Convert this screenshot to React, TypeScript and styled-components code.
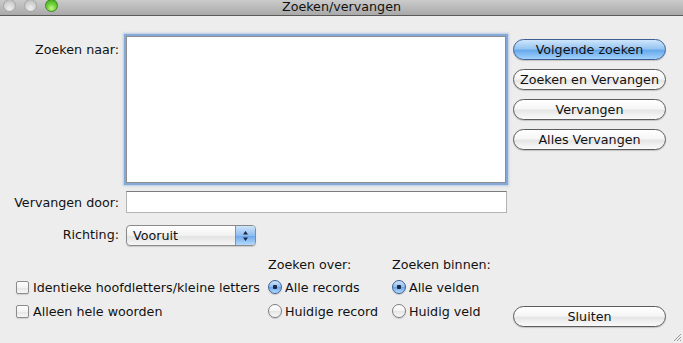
import React from "react";
import styled, { createGlobalStyle } from "styled-components";

const GlobalStyle = createGlobalStyle`
  html, body {
    margin: 0;
    padding: 0;
    background: #ededed;
  }
  body {
    font-family: "DejaVu Sans", "Liberation Sans", sans-serif;
    font-size: 12.7px;
    color: #111;
  }
`;

const Window = styled.div`
  position: relative;
  width: 683px;
  height: 343px;
  overflow: hidden;
  background: #ededed;
  display: flex;
  flex-direction: column;
`;

const TitleBar = styled.div`
  height: 15px;
  flex: none;
  display: grid;
  grid-template-columns: 1fr auto 1fr;
  align-items: center;
  background: linear-gradient(#cbcbcb, #a9a9a9);
  border-bottom: 1px solid #5a5a5a;
  box-sizing: content-box;
`;

const Lights = styled.div`
  display: flex;
  gap: 8px;
  padding-left: 3px;
  margin-top: -4px;
`;

const Light = styled.span<{ $green?: boolean }>`
  width: 13px;
  height: 13px;
  border-radius: 50%;
  box-sizing: border-box;
  border: 1px solid ${({ $green }) => ($green ? "#3f8a1c" : "#a8a8a8")};
  background: ${({ $green }) =>
    $green
      ? "radial-gradient(circle at 50% 75%, #c6f58a 0%, #6fd23a 45%, #3b9a19 100%)"
      : "radial-gradient(circle at 50% 75%, #eeeeee 0%, #d4d4d4 50%, #b3b3b3 100%)"};
`;

const Title = styled.div`
  font-size: 12.7px;
  line-height: 15px;
  margin-top: -2px;
  color: #111;
`;

const Body = styled.div`
  padding-top: 20px;
  display: flex;
  flex-direction: column;
`;

const Top = styled.div`
  display: flex;
  gap: 6px;
`;

const Form = styled.div`
  display: grid;
  grid-template-columns: 119px 381px;
  grid-template-rows: 147px 22px 25px;
  column-gap: 7px;
  row-gap: 8px;
`;

const Label = styled.div<{ $align?: string }>`
  text-align: right;
  white-space: nowrap;
  line-height: 15px;
  align-self: ${({ $align }) => $align || "center"};
  padding-top: ${({ $align }) => ($align === "start" ? "6px" : "0")};
  padding-bottom: ${({ $align }) => ($align === "end" ? "4px" : "0")};
`;

const TextArea = styled.div`
  background: #fff;
  border: 1px solid #8d8d8d;
  box-shadow: 0 0 0 2px #84a9d9, 0 0 2px 3px rgba(132, 169, 217, 0.5);
  box-sizing: border-box;
  width: 380px;
`;

const TextInput = styled.div`
  background: #fff;
  border: 1px solid #b3b3b3;
  border-top-color: #7b7b7b;
  box-sizing: border-box;
`;

const Select = styled.div`
  align-self: end;
  width: 130px;
  height: 21px;
  box-sizing: border-box;
  border: 1px solid #8a8a8a;
  border-radius: 4px;
  background: linear-gradient(#ffffff, #f1f1f1 50%, #e2e2e2 51%, #f6f6f6);
  display: flex;
  align-items: center;
  overflow: hidden;
  box-shadow: 0 1px 1px rgba(0, 0, 0, 0.15);
`;

const SelectText = styled.span`
  flex: 1;
  padding-left: 6px;
  line-height: 19px;
`;

const Stepper = styled.span`
  width: 19px;
  height: 100%;
  border-left: 1px solid #7d93b5;
  background: linear-gradient(#cfe4fa, #8fbdf0 50%, #6aa6ea 51%, #b5dafb);
  display: flex;
  align-items: center;
  justify-content: center;
`;

const Buttons = styled.div`
  display: flex;
  flex-direction: column;
  gap: 9px;
  padding-top: 3px;
`;

const Button = styled.div<{ $default?: boolean }>`
  width: 153px;
  height: 21px;
  box-sizing: border-box;
  border-radius: 11px;
  border: 1px solid ${({ $default }) => ($default ? "#3f5f93" : "#5c5c5c")};
  background: ${({ $default }) =>
    $default
      ? "linear-gradient(#cfe6fb, #97c5f2 45%, #68a9ec 55%, #a2d3fb)"
      : "linear-gradient(#ffffff, #f6f6f6 45%, #e6e6e6 55%, #fafafa)"};
  display: flex;
  align-items: center;
  justify-content: center;
  line-height: 19px;
  white-space: nowrap;
  color: #111;
  box-shadow: 0 1px 1px rgba(0, 0, 0, 0.18);
`;

const Bottom = styled.div`
  margin-top: 10px;
  margin-left: 15px;
  display: grid;
  grid-template-columns: 253px 124px 121px 153px;
  grid-template-rows: 18px 22px 22px;
  row-gap: 2px;
`;

const Heading = styled.div<{ $col: number }>`
  grid-column: ${({ $col }) => $col};
  grid-row: 1;
  line-height: 18px;
  white-space: nowrap;
`;

const Option = styled.div<{ $col: number; $row: number }>`
  grid-column: ${({ $col }) => $col};
  grid-row: ${({ $row }) => $row};
  display: flex;
  align-items: center;
  gap: 3px;
  white-space: nowrap;
`;

const Check = styled.span`
  width: 13px;
  height: 13px;
  margin-left: 1px;
  margin-right: 1px;
  box-sizing: border-box;
  border: 1px solid #8b8b8b;
  border-radius: 2px;
  background: linear-gradient(#ffffff, #f2f2f2 50%, #e3e3e3 51%, #f8f8f8);
  box-shadow: 0 1px 1px rgba(0, 0, 0, 0.12);
`;

const Radio = styled.span<{ $on?: boolean }>`
  width: 14px;
  height: 14px;
  box-sizing: border-box;
  border-radius: 50%;
  border: 1px solid ${({ $on }) => ($on ? "#3e5f91" : "#7e7e7e")};
  background: ${({ $on }) =>
    $on
      ? "radial-gradient(circle at 50% 50%, #1a2a44 0 2px, transparent 2.5px), linear-gradient(#cfe5fb, #8cbcf0 50%, #68a5ea 51%, #b6dbfb)"
      : "linear-gradient(#ffffff, #f3f3f3 50%, #e4e4e4 51%, #fafafa)"};
  box-shadow: 0 1px 1px rgba(0, 0, 0, 0.15);
`;

const CloseButton = styled(Button)`
  grid-column: 4;
  grid-row: 3;
  align-self: start;
  margin-top: 6px;
`;

const Grip = styled.svg`
  position: absolute;
  right: 1px;
  bottom: 1px;
`;

export default function App() {
  return (
    <>
      <GlobalStyle />
      <Window>
        <TitleBar>
          <Lights>
            <Light />
            <Light />
            <Light $green />
          </Lights>
          <Title>Zoeken/vervangen</Title>
          <div />
        </TitleBar>
        <Body>
          <Top>
            <Form>
              <Label $align="start">Zoeken naar:</Label>
              <TextArea />
              <Label>Vervangen door:</Label>
              <TextInput />
              <Label $align="end">Richting:</Label>
              <Select>
                <SelectText>Vooruit</SelectText>
                <Stepper>
                  <svg width="7" height="12" viewBox="0 0 7 12">
                    <path d="M3.5 1 L6 4.5 H1 Z" fill="#1b2740" />
                    <path d="M3.5 11 L6 7.5 H1 Z" fill="#1b2740" />
                  </svg>
                </Stepper>
              </Select>
            </Form>
            <Buttons>
              <Button $default>Volgende zoeken</Button>
              <Button>Zoeken en Vervangen</Button>
              <Button>Vervangen</Button>
              <Button>Alles Vervangen</Button>
            </Buttons>
          </Top>
          <Bottom>
            <Heading $col={2}>Zoeken over:</Heading>
            <Heading $col={3}>Zoeken binnen:</Heading>
            <Option $col={1} $row={2}>
              <Check />
              Identieke hoofdletters/kleine letters
            </Option>
            <Option $col={1} $row={3}>
              <Check />
              Alleen hele woorden
            </Option>
            <Option $col={2} $row={2}>
              <Radio $on />
              Alle records
            </Option>
            <Option $col={2} $row={3}>
              <Radio />
              Huidige record
            </Option>
            <Option $col={3} $row={2}>
              <Radio $on />
              Alle velden
            </Option>
            <Option $col={3} $row={3}>
              <Radio />
              Huidig veld
            </Option>
            <CloseButton>Sluiten</CloseButton>
          </Bottom>
        </Body>
        <Grip width="11" height="11" viewBox="0 0 11 11">
          <path d="M10 3 L3 10 M10 6 L6 10 M10 9 L9 10" stroke="#9a9a9a" strokeWidth="1" />
        </Grip>
      </Window>
    </>
  );
}
